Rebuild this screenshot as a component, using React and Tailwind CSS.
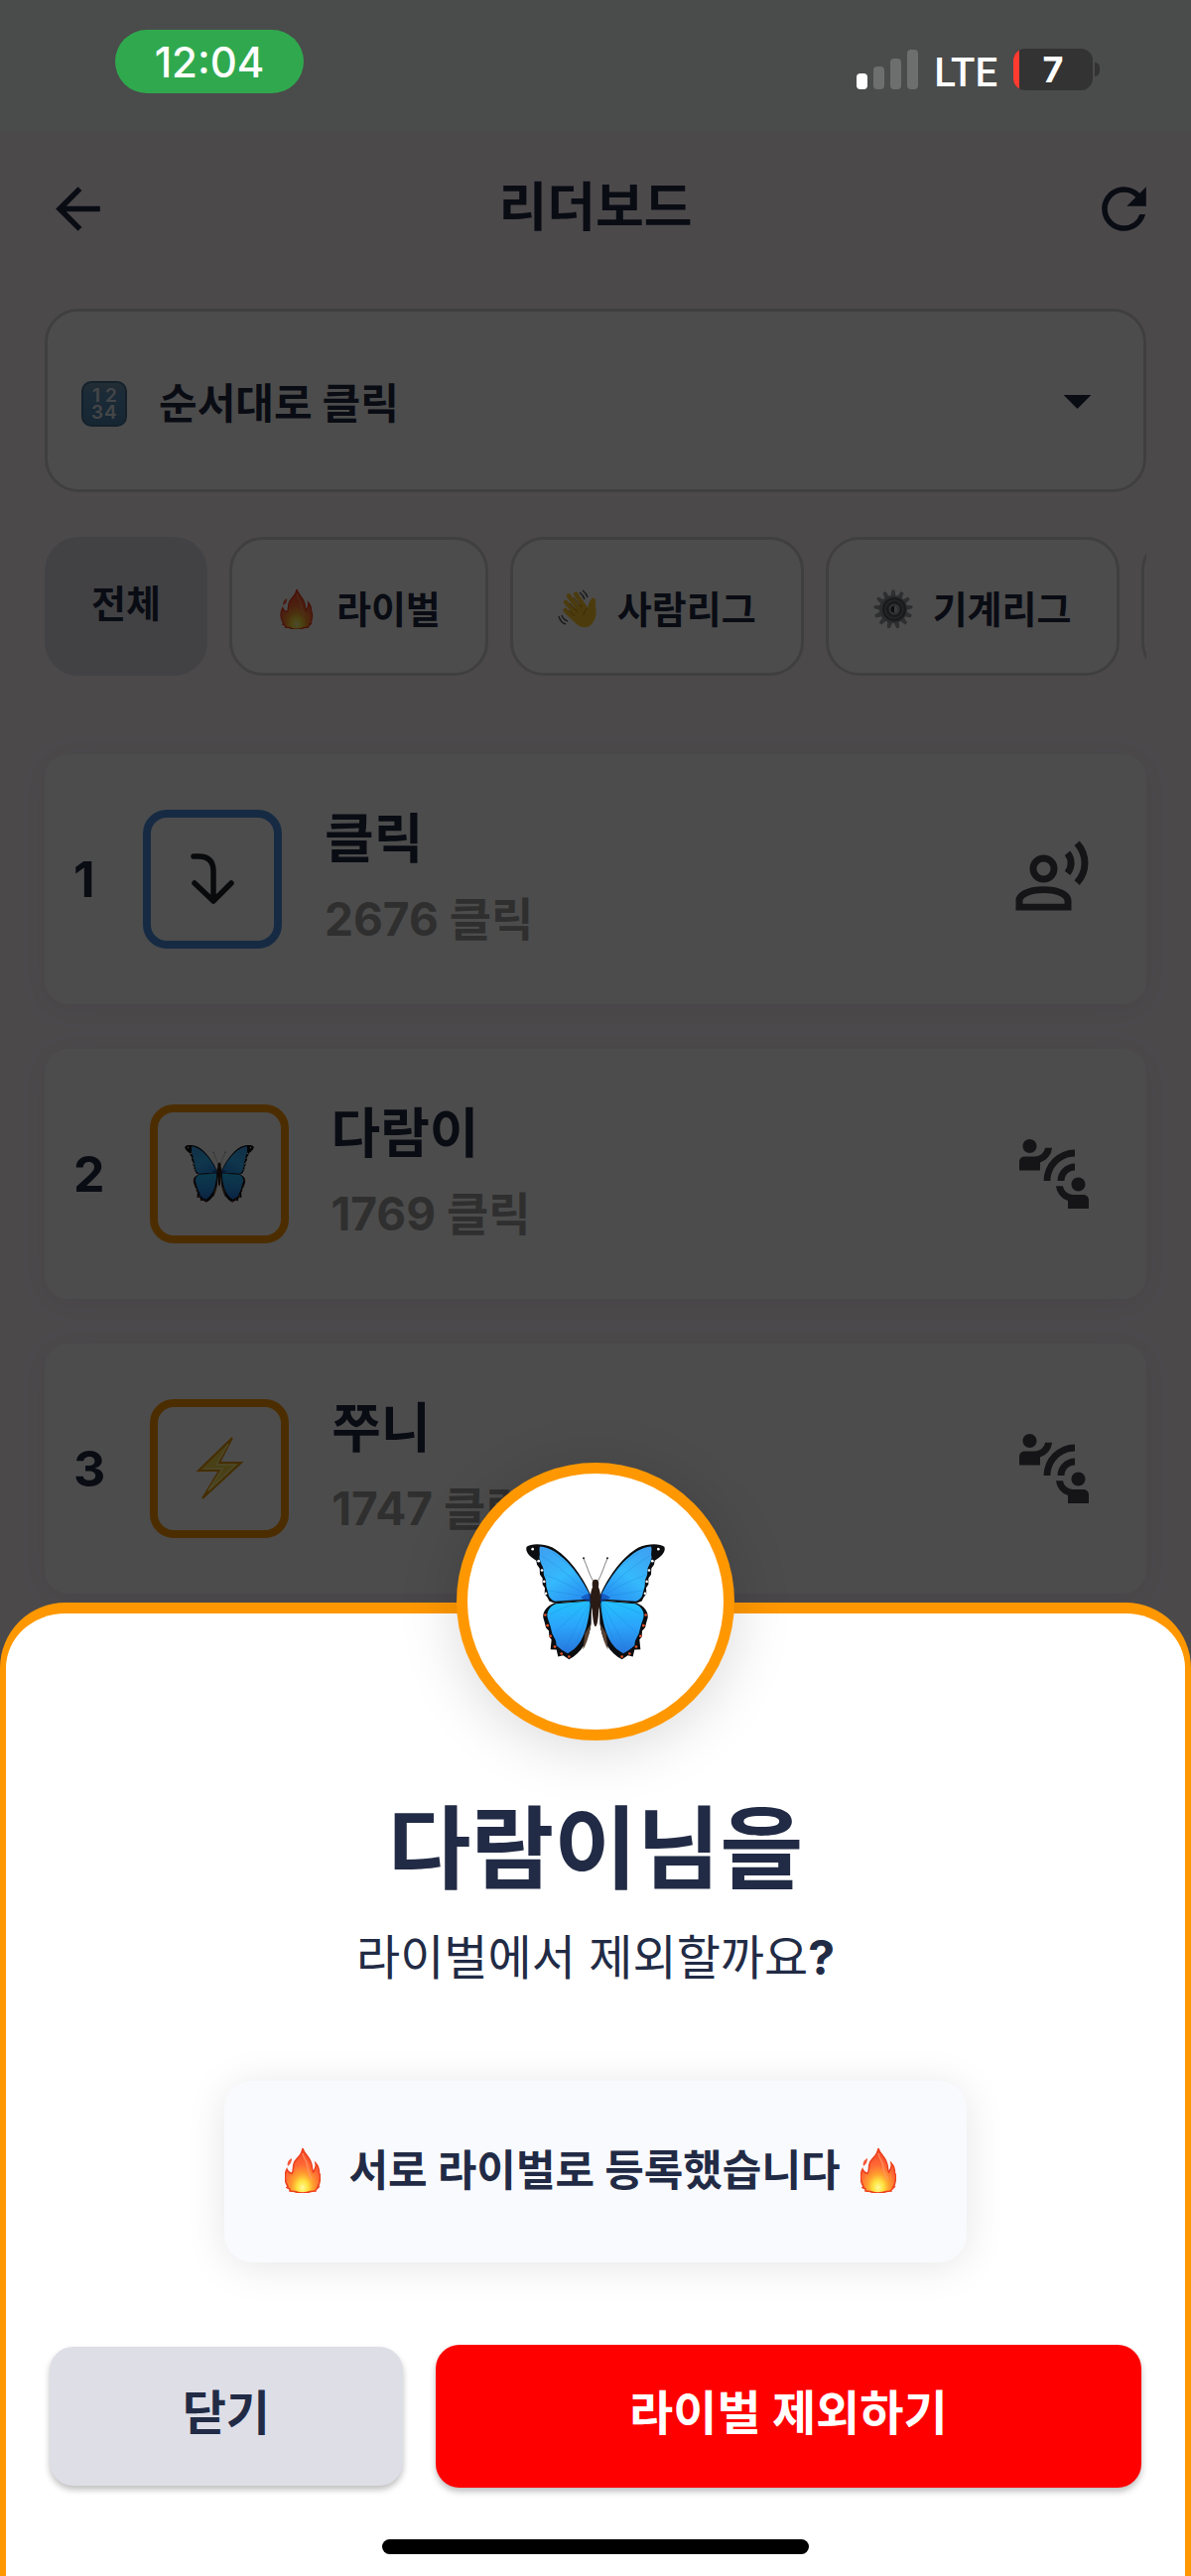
import { useState } from "react";
import {
  MdArrowBack,
  MdRefresh,
  MdArrowDropDown,
  MdConnectWithoutContact,
} from "react-icons/md";

const Fire = ({ className }) => (
  <svg viewBox="0 0 36 45" className={className} aria-hidden="true">
    <defs>
      <radialGradient id="fire" cx="50%" cy="88%" r="85%">
        <stop offset="0" stopColor="#fffa9a" />
        <stop offset="0.18" stopColor="#ffe23f" />
        <stop offset="0.36" stopColor="#ffa02f" />
        <stop offset="0.6" stopColor="#ff6a35" />
        <stop offset="1" stopColor="#f0432a" />
      </radialGradient>
    </defs>
    <path
      d="M18 0C19 6 27 9 27.500 20C27.500 22 28 23 28.500 24C30 22 32 19 31 15C34 18 34.500 22 34.500 25C36 26 36 35 33 39L34 39L31 42L31 43L26 43.500C21 45.500 14 45.500 10 43.500L5 43L5 41L2 39.500L3 38.500C0 34 -1 27 2 21C3 24 5 25 7 25.500C9 23 8 20 9 16C10 10 17 9 18 0Z"
      fill="url(#fire)"
      stroke="#ee3f1c"
      strokeWidth="1.500"
    />
    <path d="M7 10C3 12 2 15 3 18C6 16 7 13 7 10Z" fill="#f4583a" />
    <path
      d="M18 5C19 11 23 13 23 20C23 25 26 27 27 31"
      fill="none"
      stroke="#ff9a6c"
      strokeWidth="1.500"
      opacity="0.7"
    />
  </svg>
);

const Wave = ({ className }) => (
  <svg viewBox="0 0 40 40" className={className} fill="none" aria-hidden="true">
    <g stroke="#ffc52e" strokeWidth="4.500" strokeLinecap="round">
      <path d="M8 13L20 26" />
      <path d="M11 6.500L23 22" />
      <path d="M18 4.500L28 19" />
      <path d="M7.500 21L18 31" />
    </g>
    <path
      d="M11 24L24 13L30 19C31 15 33 8 36 8.500C40 9 37 15 38.500 20C39 27 37 33 32 37C26 40 20 37 16 32Z"
      fill="#ffc52e"
    />
    <path
      d="M12 14L20 23M16 8L24 18M11 21L17 27M30 19C28 20 26 23 26 26"
      stroke="#c98a12"
      strokeWidth="1"
    />
    <path
      d="M25 1C28 3 29 5 30 8M22 3C25 5 26 7 27 10M1 27C2 31 5 34 8 35M4 26C5 29 7 31 10 32"
      stroke="#555"
      strokeWidth="1.400"
    />
  </svg>
);

const teeth = [0, 28, 55, 83, 111, 138, 166, 194, 222, 249, 277, 305, 332];

const Gear = ({ className }) => (
  <svg viewBox="0 0 40 40" className={className} aria-hidden="true">
    {teeth.map((angle) => (
      <path
        key={angle}
        d="M17 9L18.500 0.500L21.500 0.500L23 9Z"
        fill="#9a9da2"
        transform={`rotate(${angle} 20 20)`}
      />
    ))}
    <circle cx="20" cy="20" r="14" fill="#8d9095" />
    <circle cx="21" cy="20" r="12" fill="#55585d" />
    <circle cx="21" cy="20" r="9" fill="none" stroke="#7b7e83" strokeWidth="1.500" />
    <circle cx="21" cy="20" r="5.500" fill="#a9acb1" />
    <circle cx="21" cy="20" r="3.500" fill="#2d2f33" />
    <path d="M21 16.500a3.500 3.500 0 010 7z" fill="#c5c7ca" />
  </svg>
);

const Numbers = ({ className }) => (
  <svg viewBox="0 0 46 46" className={className} aria-hidden="true">
    <defs>
      <linearGradient id="numbers" x1="0" y1="0" x2="0" y2="1">
        <stop offset="0" stopColor="#7797ac" />
        <stop offset="0.3" stopColor="#5a8fb8" />
        <stop offset="1" stopColor="#4a82ad" />
      </linearGradient>
    </defs>
    <rect x="1" y="1" width="44" height="44" rx="9" fill="url(#numbers)" stroke="#456f91" strokeWidth="2" />
    <g fill="#e4ebf0" fontFamily="Inter, sans-serif" fontSize="19" fontWeight="600">
      <text x="11" y="21">1</text>
      <text x="24" y="21">2</text>
      <text x="10" y="38">3</text>
      <text x="23" y="38">4</text>
    </g>
  </svg>
);

const CurvedArrow = ({ className }) => (
  <svg
    viewBox="0 0 44 52"
    className={className}
    fill="none"
    stroke="#202325"
    strokeWidth="5.500"
    strokeLinecap="round"
    strokeLinejoin="round"
    aria-hidden="true"
  >
    <path d="M3 3H8C18 3 23 8 23 18V48M4 30L23 48L41 30" />
  </svg>
);

const Bolt = ({ className }) => (
  <svg viewBox="0 0 50 72" className={className} aria-hidden="true">
    <path
      d="M38 5L4 38H25L8 66L47 30H25Z"
      fill="#f5d84a"
      stroke="#e8960c"
      strokeWidth="2"
      strokeLinejoin="miter"
    />
    <path d="M34 11L22 32H41L14 58L28 36H10" fill="none" stroke="#fff08a" strokeWidth="1.500" />
  </svg>
);

const VoiceOver = ({ className }) => (
  <svg viewBox="0 0 24 24" className={className} fill="none" aria-hidden="true">
    <circle cx="9" cy="9" r="3" stroke="currentColor" strokeWidth="2" />
    <path
      d="M1 21V18.200C1 15.400 5 14.100 9 14.100S17 15.400 17 18.200V21ZM3 19.100H15V18.200C15 17 12 16 9 16S3 17 3 18.200Z"
      fill="currentColor"
      fillRule="evenodd"
    />
    <path
      d="M15.850 4.500C17.250 6.200 17.250 8.500 15.850 10.250M18.600 1.650C21.600 5 21.600 9.700 18.600 13.050"
      stroke="currentColor"
      strokeWidth="2"
    />
  </svg>
);

const Wing = () => (
  <g>
    <path
      d="M194 150C170 95 125 35 80 10C50 -3 15 -3 2 8C-3 20 8 33 20 42L31 50L33 62L41 73L42 92L50 103L50 122L57 132L56 150L64 160L70 172L85 178L197 170Z"
      fill="#0b0d10"
    />
    <path
      d="M42 7C100 12 155 80 190 148L192 166L88 173C76 168 68 160 67 148L61 128L60 108L54 94L52 72L44 55L40 40C44 28 38 18 42 7Z"
      fill="url(#upperWing)"
    />
    <path
      d="M88 177C62 186 50 204 52 222L56 236L60 252L69 262L70 280L77 288L74 318L92 319L97 340L112 336L130 348C165 332 192 290 197 238L198 170Z"
      fill="#0b0d10"
    />
    <path
      d="M90 180C70 188 61 206 65 222L73 246L79 270L90 292L92 306L108 320L126 330C165 312 186 265 194 182L192 172Z"
      fill="url(#lowerWing)"
    />
    <path d="M196 240C190 285 178 310 172 318L178 270Z" fill="#5a4436" />
    <path
      d="M190 155C150 110 90 60 46 35M190 158C140 125 90 105 56 92M190 162C140 150 95 145 64 140M190 170C140 180 105 195 72 212M190 172C155 205 115 240 86 268M192 176C165 225 140 275 118 315M192 180C182 225 168 260 152 298M185 145C160 80 120 55 80 25"
      fill="none"
      stroke="#1478cf"
      strokeWidth="1.500"
      opacity="0.5"
    />
    <path d="M196 150C182 148 172 156 165 163L196 176Z" fill="#0a3aa8" opacity="0.6" />
    <g fill="#fff">
      <circle cx="20" cy="15" r="4" />
      <circle cx="38" cy="51" r="4" />
      <circle cx="48" cy="79" r="4" />
      <circle cx="55" cy="113" r="4" />
      <circle cx="60" cy="149" r="4" />
    </g>
    <g fill="#e8542c">
      <circle cx="58" cy="214" r="4" />
      <circle cx="65" cy="246" r="4" />
      <circle cx="74" cy="278" r="4" />
      <circle cx="87" cy="310" r="4" />
      <circle cx="107" cy="331" r="4" />
      <circle cx="130" cy="340" r="4" />
    </g>
    <path d="M203 112C190 90 184 65 174 43" fill="none" stroke="#444" strokeWidth="2" />
    <circle cx="174" cy="42" r="3" fill="#222" />
  </g>
);

const Butterfly = ({ className }) => (
  <svg viewBox="0 0 420 350" className={className} aria-hidden="true">
    <defs>
      <linearGradient id="upperWing" x1="0" y1="0" x2="0.600" y2="1">
        <stop offset="0" stopColor="#3f9ff0" />
        <stop offset="0.600" stopColor="#35b9fd" />
        <stop offset="1" stopColor="#2a96f2" />
      </linearGradient>
      <linearGradient id="lowerWing" x1="0" y1="0" x2="0" y2="1">
        <stop offset="0" stopColor="#24c3ff" />
        <stop offset="0.500" stopColor="#2ba3fa" />
        <stop offset="1" stopColor="#2676dc" />
      </linearGradient>
    </defs>
    <Wing />
    <g transform="translate(420 0) scale(-1 1)">
      <Wing />
    </g>
    <path
      d="M210 107C222 107 220 122 219 130C228 150 226 175 220 200C218 225 216 248 210 249C204 248 202 225 200 200C194 175 192 150 201 130C200 122 198 107 210 107Z"
      fill="#2a1b14"
    />
  </svg>
);

const filters = [
  { id: "all", label: "전체" },
  { id: "rival", label: "라이벌", Icon: Fire },
  { id: "human", label: "사람리그", Icon: Wave },
  { id: "machine", label: "기계리그", Icon: Gear },
  { id: "more", label: "" },
];

const players = [
  {
    rank: 1,
    name: "클릭",
    score: "2676 클릭",
    border: "border-[#4a90e2]",
    avatar: <CurvedArrow className="h-[52px] w-11" />,
    Action: VoiceOver,
    actionLabel: "라이벌 등록",
  },
  {
    rank: 2,
    name: "다람이",
    score: "1769 클릭",
    border: "border-[#ff9800]",
    avatar: <Butterfly className="h-[58px] w-[70px]" />,
    Action: MdConnectWithoutContact,
    actionLabel: "라이벌 제외",
  },
  {
    rank: 3,
    name: "쭈니",
    score: "1747 클릭",
    border: "border-[#ff9800]",
    avatar: <Bolt className="h-[72px] w-[50px]" />,
    Action: MdConnectWithoutContact,
    actionLabel: "라이벌 제외",
  },
];

const StatusBar = () => (
  <div className="relative z-20 flex h-[133px] items-start justify-between bg-[#4a4b4b] pt-[30px] pr-[92px] pl-[116px] text-white">
    <div className="flex h-16 w-[190px] items-center justify-center rounded-full bg-[#30a94e] text-[42px] font-medium">
      12:04
    </div>
    <div className="flex h-20 items-center">
      <svg viewBox="0 0 62 40" className="h-10 w-[62px]" aria-hidden="true">
        <rect x="0" y="24" width="11" height="16" rx="4" fill="#fff" />
        <rect x="17" y="17" width="11" height="23" rx="4" fill="#6d6e6e" />
        <rect x="34" y="9" width="11" height="31" rx="4" fill="#6d6e6e" />
        <rect x="51" y="0" width="11" height="40" rx="4" fill="#6d6e6e" />
      </svg>
      <span className="mt-2 ml-4 font-[Roboto] text-[40px] leading-none font-medium">
        LTE
      </span>
      <div className="ml-4 flex h-[42px] w-20 items-stretch overflow-hidden rounded-xl bg-[#333]">
        <div className="w-1.5 bg-[#ff3b30]" />
        <span className="flex-1 pr-1.5 text-center text-4xl leading-[42px] font-bold">
          7
        </span>
      </div>
      <div className="ml-0.5 h-3.5 w-[5px] rounded-r-full bg-[#333]" />
    </div>
  </div>
);

const PlayerCard = ({ player }) => {
  const { rank, name, score, border, avatar, Action, actionLabel } = player;

  return (
    <li className="flex h-[252px] items-center rounded-3xl bg-white pr-[51px] pl-[29px] shadow-[0_4px_30px_rgba(0,0,0,0.06)]">
      <span className="min-w-[25px] text-[50px] font-bold">{rank}</span>
      <div
        className={`ml-[45px] flex size-[140px] items-center justify-center rounded-3xl border-8 ${border}`}
      >
        {avatar}
      </div>
      <div className="ml-[43px] flex-1">
        <p className="text-[54px] leading-[80px] font-bold">{name}</p>
        <p className="text-[46px] leading-[80px] font-bold text-[#9e9e9e]">
          {score}
        </p>
      </div>
      <button type="button" aria-label={actionLabel}>
        <Action className="size-[84px] text-[#49454f]" />
      </button>
    </li>
  );
};

const RivalSheet = () => (
  <div
    role="dialog"
    aria-labelledby="sheet-title"
    className="relative flex flex-col items-center rounded-t-[66px] border-x-6 border-t-11 border-[#ff9800] bg-white px-11 pt-[177px] pb-[22px]"
  >
    <div className="absolute -top-[152px] left-1/2 flex size-[280px] -translate-x-1/2 items-center justify-center rounded-full border-11 border-[#ff9800] bg-white shadow-[0_8px_60px_rgba(0,0,0,0.15)]">
      <Butterfly className="h-[117px] w-[140px]" />
    </div>
    <h2 id="sheet-title" className="text-[91px] leading-[120px] font-bold">
      다람이님을
    </h2>
    <p className="mt-5 text-5xl leading-[60px]">
      라이벌에서 제외할까요<span className="font-bold">?</span>
    </p>
    <div className="mt-[94px] flex h-[183px] items-center rounded-[28px] bg-[#f9fafe] pr-[71px] pb-0.5 pl-[61px] text-[43px] font-bold shadow-[0_4px_40px_rgba(0,0,0,0.1)]">
      <Fire className="h-[45px] w-9" />
      <span className="mr-5 ml-7">서로 라이벌로 등록했습니다</span>
      <Fire className="h-[45px] w-9" />
    </div>
    <div className="mt-[83px] flex w-full items-center gap-[33px] text-5xl font-bold">
      <button
        type="button"
        className="h-[140px] flex-1 rounded-3xl bg-[#dedee7] pb-1.5 shadow-[0_4px_6px_rgba(0,0,0,0.25)]"
      >
        닫기
      </button>
      <button
        type="button"
        className="h-36 flex-2 rounded-3xl bg-[#ff0000] pb-1.5 text-white shadow-[0_4px_6px_rgba(0,0,0,0.25)]"
      >
        라이벌 제외하기
      </button>
    </div>
    <div className="mt-[52px] h-[15px] w-[430px] rounded-full bg-black" />
  </div>
);

const App = () => {
  const [filter, setFilter] = useState("all");

  return (
    <div className="relative min-h-screen overflow-hidden bg-[#fdf4fb] font-['Inter','Noto_Sans_CJK_KR',sans-serif] text-[#222b45]">
      <StatusBar />
      <header className="grid h-[154px] grid-cols-[1fr_auto_1fr] items-center px-[34px]">
        <button type="button" aria-label="뒤로" className="pl-[11px]">
          <MdArrowBack className="size-[67px]" />
        </button>
        <h1 className="text-[53px] font-bold">리더보드</h1>
        <button type="button" aria-label="새로고침" className="justify-self-end">
          <MdRefresh className="size-[67px]" />
        </button>
      </header>

      <main className="px-[45px] pt-6">
        <label className="flex h-[185px] items-center rounded-[34px] border-3 border-[#d4d4d4] bg-white pr-[33px] pl-[34px]">
          <Numbers className="mt-1.5 size-[46px]" />
          <select
            aria-label="게임"
            className="mt-1.5 ml-8 flex-1 appearance-none text-[42px] leading-[60px] font-bold"
          >
            <option>순서대로 클릭</option>
          </select>
          <MdArrowDropDown className="size-[67px]" />
        </label>

        <div className="mt-[45px] flex gap-[22px] overflow-hidden text-[38px] font-bold">
          {filters.map(({ id, label, Icon }) => (
            <button
              key={id}
              type="button"
              onClick={() => setFilter(id)}
              className={
                filter === id
                  ? "flex h-[140px] shrink-0 items-center rounded-[34px] bg-[#dcdee3] px-[47px] pb-1.5"
                  : "flex h-[140px] shrink-0 items-center rounded-[34px] border-3 border-[#d4d4d4] bg-white px-[45px] pt-1.5"
              }
            >
              {Icon && <Icon className="mr-5 size-10" />}
              {label}
            </button>
          ))}
        </div>

        <ul className="mt-[79px] flex flex-col gap-[45px]">
          {players.map((player) => (
            <PlayerCard key={player.rank} player={player} />
          ))}
        </ul>
      </main>

      <div className="absolute inset-0 z-10 flex flex-col justify-end bg-black/70">
        <RivalSheet />
      </div>
    </div>
  );
};

export default App;
